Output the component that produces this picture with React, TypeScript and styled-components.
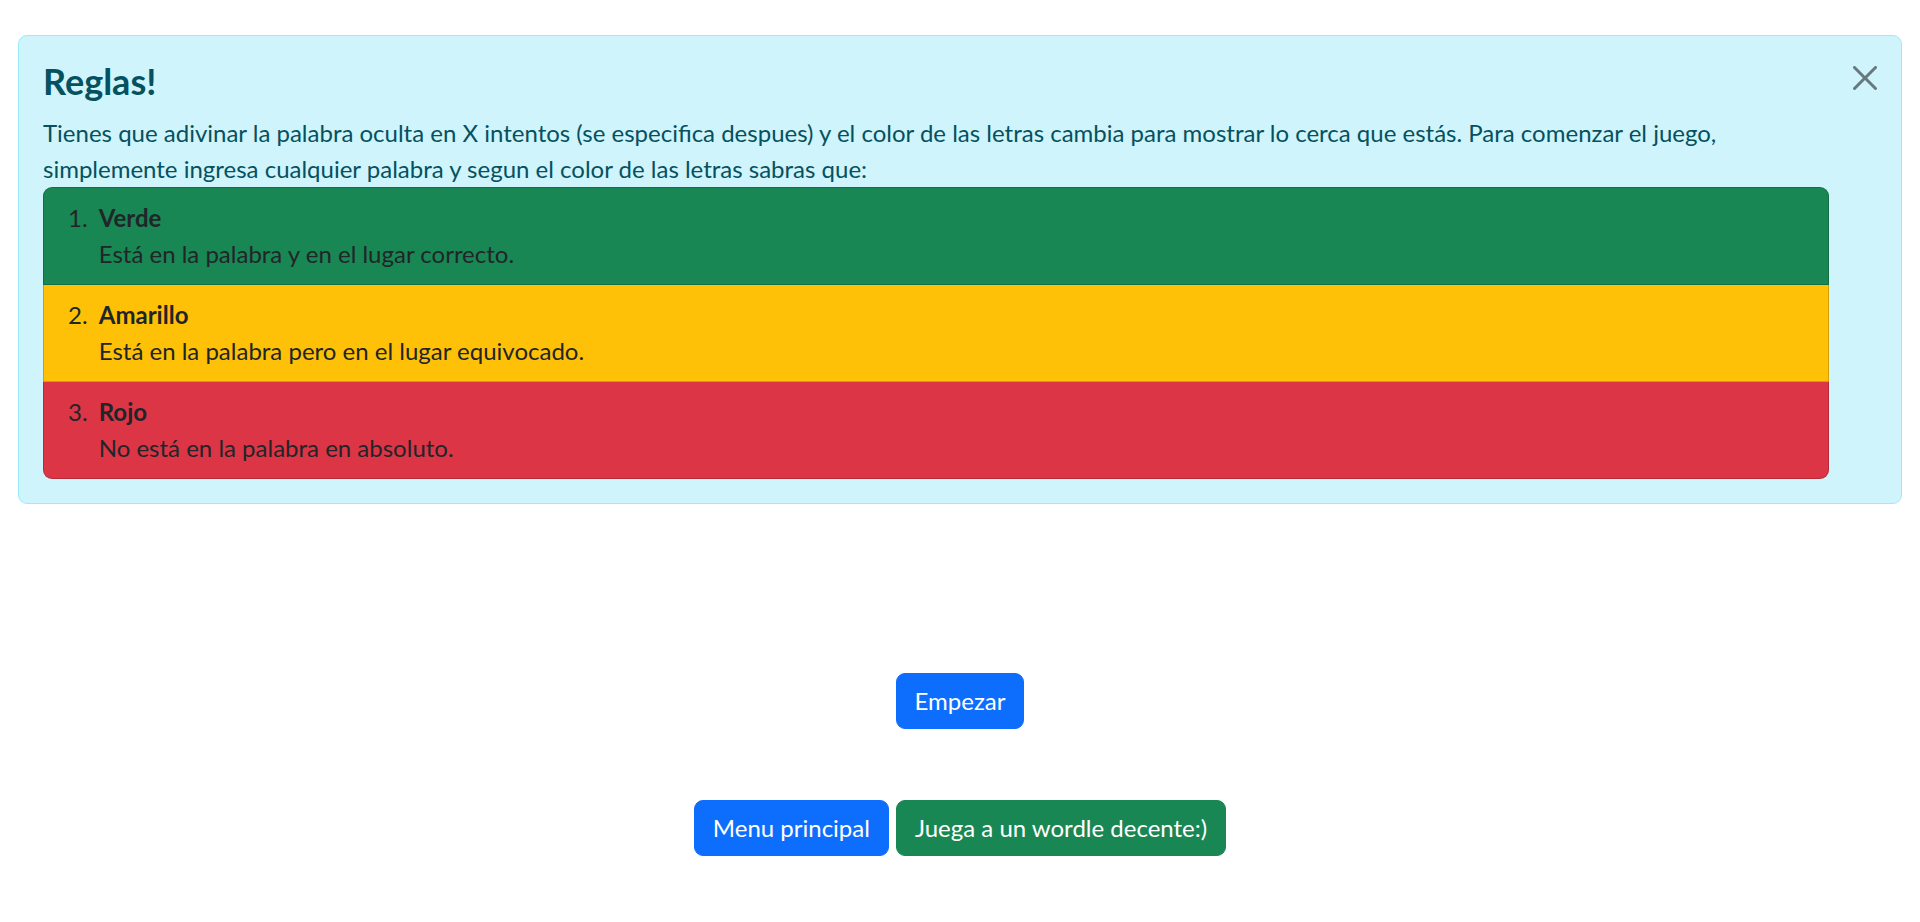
import React from "react";
import styled, { createGlobalStyle } from "styled-components";

const GlobalStyle = createGlobalStyle`
  * {
    box-sizing: border-box;
  }

  body {
    margin: 0;
    background: #fff;
    color: #212529;
    font-family: "Segoe UI", Lato, "Noto Sans", sans-serif;
    font-size: 24px;
    line-height: 1.5;
  }
`;

const Page = styled.div`
  padding: 35px 18px 0;
`;

const Alert = styled.div`
  position: relative;
  padding: 24px 72px 24px 24px;
  margin-bottom: 24px;
  color: #055160;
  background: #cff4fc;
  border: 1px solid #9eeaf9;
  border-radius: 9px;
`;

const Heading = styled.h4`
  margin: 0 0 12px;
  font-size: 36px;
  font-weight: 700;
  line-height: 1.2;
  color: inherit;
`;

const Text = styled.p`
  margin: 0;
`;

const CloseButton = styled.button`
  position: absolute;
  top: 0;
  right: 0;
  padding: 30px 24px;
  border: 0;
  background: transparent;
  opacity: 0.5;
  cursor: pointer;
  line-height: 0;

  svg {
    width: 24px;
    height: 24px;
  }
`;

const RuleList = styled.ol`
  display: flex;
  flex-direction: column;
  margin: 0;
  padding: 0;
  list-style: none;
  counter-reset: rule;
  border-radius: 9px;
`;

const RuleItem = styled.li<{ $bg: string }>`
  display: flex;
  align-items: flex-start;
  padding: 12px 24px;
  color: #212529;
  background: ${(p) => p.$bg};
  border: 1px solid rgba(0, 0, 0, 0.175);
  counter-increment: rule;

  & + & {
    border-top-width: 0;
  }

  &:first-child {
    border-top-left-radius: inherit;
    border-top-right-radius: inherit;
  }

  &:last-child {
    border-bottom-left-radius: inherit;
    border-bottom-right-radius: inherit;
  }

  &::before {
    content: counter(rule) ". ";
    white-space: pre;
  }
`;

const RuleBody = styled.div`
  margin-left: 5px;
  margin-right: auto;
`;

const RuleName = styled.div`
  font-weight: 700;
`;

const Actions = styled.div<{ $top: number }>`
  display: flex;
  justify-content: center;
  gap: 7px;
  margin-top: ${(p) => p.$top}px;
`;

const Button = styled.button<{ $color: string }>`
  padding: 9px 18px;
  font-family: inherit;
  font-size: 24px;
  line-height: 36px;
  color: #fff;
  background: ${(p) => p.$color};
  border: 1px solid ${(p) => p.$color};
  border-radius: 9px;
  cursor: pointer;
`;

const rules = [
  { name: "Verde", text: "Está en la palabra y en el lugar correcto.", bg: "#198754" },
  { name: "Amarillo", text: "Está en la palabra pero en el lugar equivocado.", bg: "#ffc107" },
  { name: "Rojo", text: "No está en la palabra en absoluto.", bg: "#dc3545" },
];

export default function App() {
  return (
    <Page>
      <GlobalStyle />
      <Alert>
        <Heading>Reglas!</Heading>
        <Text>
          Tienes que adivinar la palabra oculta en X intentos (se especifica despues) y el color de las
          letras cambia para mostrar lo cerca que estás. Para comenzar el juego, simplemente ingresa
          cualquier palabra y segun el color de las letras sabras que:
        </Text>
        <RuleList>
          {rules.map((r) => (
            <RuleItem key={r.name} $bg={r.bg}>
              <RuleBody>
                <RuleName>{r.name}</RuleName>
                {r.text}
              </RuleBody>
            </RuleItem>
          ))}
        </RuleList>
        <CloseButton aria-label="Close">
          <svg viewBox="0 0 16 16" fill="#000">
            <path d="M.293.293a1 1 0 0 1 1.414 0L8 6.586 14.293.293a1 1 0 1 1 1.414 1.414L9.414 8l6.293 6.293a1 1 0 0 1-1.414 1.414L8 9.414l-6.293 6.293a1 1 0 0 1-1.414-1.414L6.586 8 .293 1.707a1 1 0 0 1 0-1.414z" />
          </svg>
        </CloseButton>
      </Alert>
      <Actions $top={169}>
        <Button $color="#0d6efd">Empezar</Button>
      </Actions>
      <Actions $top={71}>
        <Button $color="#0d6efd">Menu principal</Button>
        <Button $color="#198754">Juega a un wordle decente:)</Button>
      </Actions>
    </Page>
  );
}
